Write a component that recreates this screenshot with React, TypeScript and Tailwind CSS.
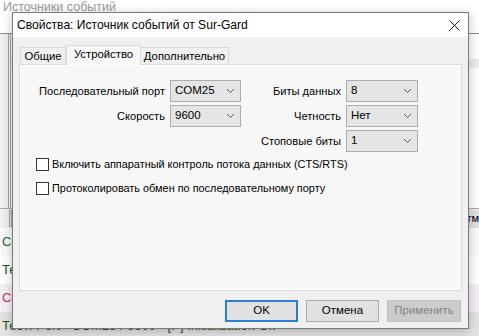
import React from "react";

function Chevron() {
  return (
    <svg width="9" height="6" viewBox="0 0 9 6" className="shrink-0">
      <path d="M1 1 L4.5 4.5 L8 1" fill="none" stroke="#5a5a5a" strokeWidth="1" />
    </svg>
  );
}

function Select({ value, w }: { value: string; w: string }) {
  return (
    <div
      className={`${w} h-[22px] shrink-0 flex items-center justify-between pl-[4px] pr-[5px] bg-[#e5e5e5] border border-[#adadad] text-[11.5px] text-black`}
    >
      <span>{value}</span>
      <Chevron />
    </div>
  );
}

function Field({ label, value, w }: { label: string; value: string; w: string }) {
  return (
    <div className="flex items-center h-[22px]">
      <span className="flex-1 text-right pr-[5px] text-[11.1px] text-black whitespace-nowrap">{label}</span>
      <Select value={value} w={w} />
    </div>
  );
}

function Check({ label }: { label: string }) {
  return (
    <div className="flex items-center h-[13px] gap-[3px]">
      <div className="w-[13px] h-[13px] border border-[#333333] bg-white shrink-0" />
      <span className="text-[10.9px] text-black whitespace-nowrap leading-[13px]">{label}</span>
    </div>
  );
}

export default function App() {
  return (
    <div className="relative w-[479px] h-[336px] overflow-hidden bg-white font-['Liberation_Sans',Arial,sans-serif]">
      {/* background window */}
      <div className="h-[33px] px-[3px] text-[12.5px] leading-[15px] text-[#9a9a9a]">Источники событий</div>
      <div className="h-[175px] flex border-t border-[#8c8c8c] bg-[#f0f0f0]">
        <div className="w-[8px] shrink-0" />
        <div className="w-[3px] shrink-0 border-x border-[#a8a8a8]" />
        <div className="flex-1 flex flex-col bg-white">
          <div className="h-[25px]" />
          <div className="h-[9px] bg-[#ececec]" />
          <div className="flex-1" />
        </div>
      </div>
      <div className="h-[20px] flex items-center justify-between border-t border-[#a8a8a8] bg-[#f0f0f0]">
        <div className="ml-[9px] w-[3px] h-[17px] border border-[#a8a8a8] bg-[#e6e6e6]" />
        <div className="h-[18px] flex items-center whitespace-nowrap text-[11px] text-black bg-[#e1e1e1] border-l border-[#adadad] pl-[1px]">
          тм
        </div>
      </div>
      <div className="h-[28px] flex items-center pl-[2px] bg-[#fafafa] text-[13px] text-[#2d5a3a] whitespace-nowrap">
        Соединение установлено
      </div>
      <div className="h-[28px] flex items-center pl-[2px] bg-white text-[13px] text-[#1c4d1c] whitespace-nowrap">
        Тест связи выполнен
      </div>
      <div className="h-[28px] flex items-center pl-[2px] bg-[#f7eff7] text-[13px] text-[#b5334e] whitespace-nowrap">
        Соединение потеряно
      </div>
      <div className="h-[28px] flex items-center pl-[2px] bg-[#e3e3e3] text-[13px] text-[#1d5a1d] whitespace-nowrap">
        Тест: Port - COM25 / 9600 - [P] Initialization Ok
      </div>

      {/* dialog */}
      <div className="absolute left-[12px] top-[12px] w-[457px] h-[317px] border border-[#7a7a7a] bg-[#f0f0f0] flex flex-col shadow-[0_2px_10px_rgba(0,0,0,0.25)]">
        <div className="h-[24px] shrink-0 bg-white flex items-center pl-[4px] pr-[8px]">
          <span className="flex-1 text-[12.1px] text-black whitespace-nowrap">Свойства: Источник событий от Sur-Gard</span>
          <svg width="11" height="11" viewBox="0 0 11 11">
            <path d="M0.5 0.5 L10.5 10.5 M10.5 0.5 L0.5 10.5" stroke="#1a1a1a" strokeWidth="1" />
          </svg>
        </div>
        <div className="flex-1 flex flex-col px-[6px] pt-[8px] pb-[6px]">
          {/* tabs */}
          <div className="flex items-end h-[19px] pl-[1px] relative z-10">
            <div className="w-[46px] h-[17px] flex items-center justify-center border border-b-0 border-[#d9d9d9] bg-[#f0f0f0] text-[11.3px] text-black">
              Общие
            </div>
            <div className="w-[75px] h-[20px] -mb-px pb-[2px] flex items-center justify-center border border-b-0 border-[#d9d9d9] bg-[#f7f7f7] text-[11.3px] text-black">
              Устройство
            </div>
            <div className="w-[88px] h-[17px] flex items-center justify-center border border-b-0 border-l-0 border-[#d9d9d9] bg-[#f0f0f0] text-[11.3px] text-black">
              Дополнительно
            </div>
          </div>
          {/* panel */}
          <div className="flex-1 border border-[#d9d9d9] bg-[#f7f7f7] shadow-[inset_1px_1px_0_#ffffff,inset_-1px_-1px_0_#ffffff] pt-[15px] flex flex-col">
            <div className="flex">
              <div className="w-[221px] flex flex-col gap-[3px]">
                <Field label="Последовательный порт" value="COM25" w="w-[71px]" />
                <Field label="Скорость" value="9600" w="w-[71px]" />
              </div>
              <div className="w-[177px] flex flex-col gap-[3px]">
                <Field label="Биты данных" value="8" w="w-[72px]" />
                <Field label="Четность" value="Нет" w="w-[72px]" />
                <Field label="Стоповые биты" value="1" w="w-[72px]" />
              </div>
            </div>
            <div className="mt-[6px] pl-[16px] flex flex-col gap-[11px]">
              <Check label="Включить аппаратный контроль потока данных (CTS/RTS)" />
              <Check label="Протоколировать обмен по последовательному порту" />
            </div>
          </div>
          {/* buttons */}
          <div className="mt-[9px] flex justify-end gap-[8px] pr-[1px]">
            <div className="w-[73px] h-[22px] flex items-center justify-center border-2 border-[#2a7fd4] bg-[#e1e1e1] text-[11.5px] text-black">
              OK
            </div>
            <div className="w-[73px] h-[22px] flex items-center justify-center border border-[#adadad] bg-[#e1e1e1] text-[11.5px] text-black">
              Отмена
            </div>
            <div className="w-[74px] h-[22px] flex items-center justify-center border border-[#bfbfbf] bg-[#cccccc] text-[11.5px] text-[#838383]">
              Применить
            </div>
          </div>
        </div>
      </div>
    </div>
  );
}
